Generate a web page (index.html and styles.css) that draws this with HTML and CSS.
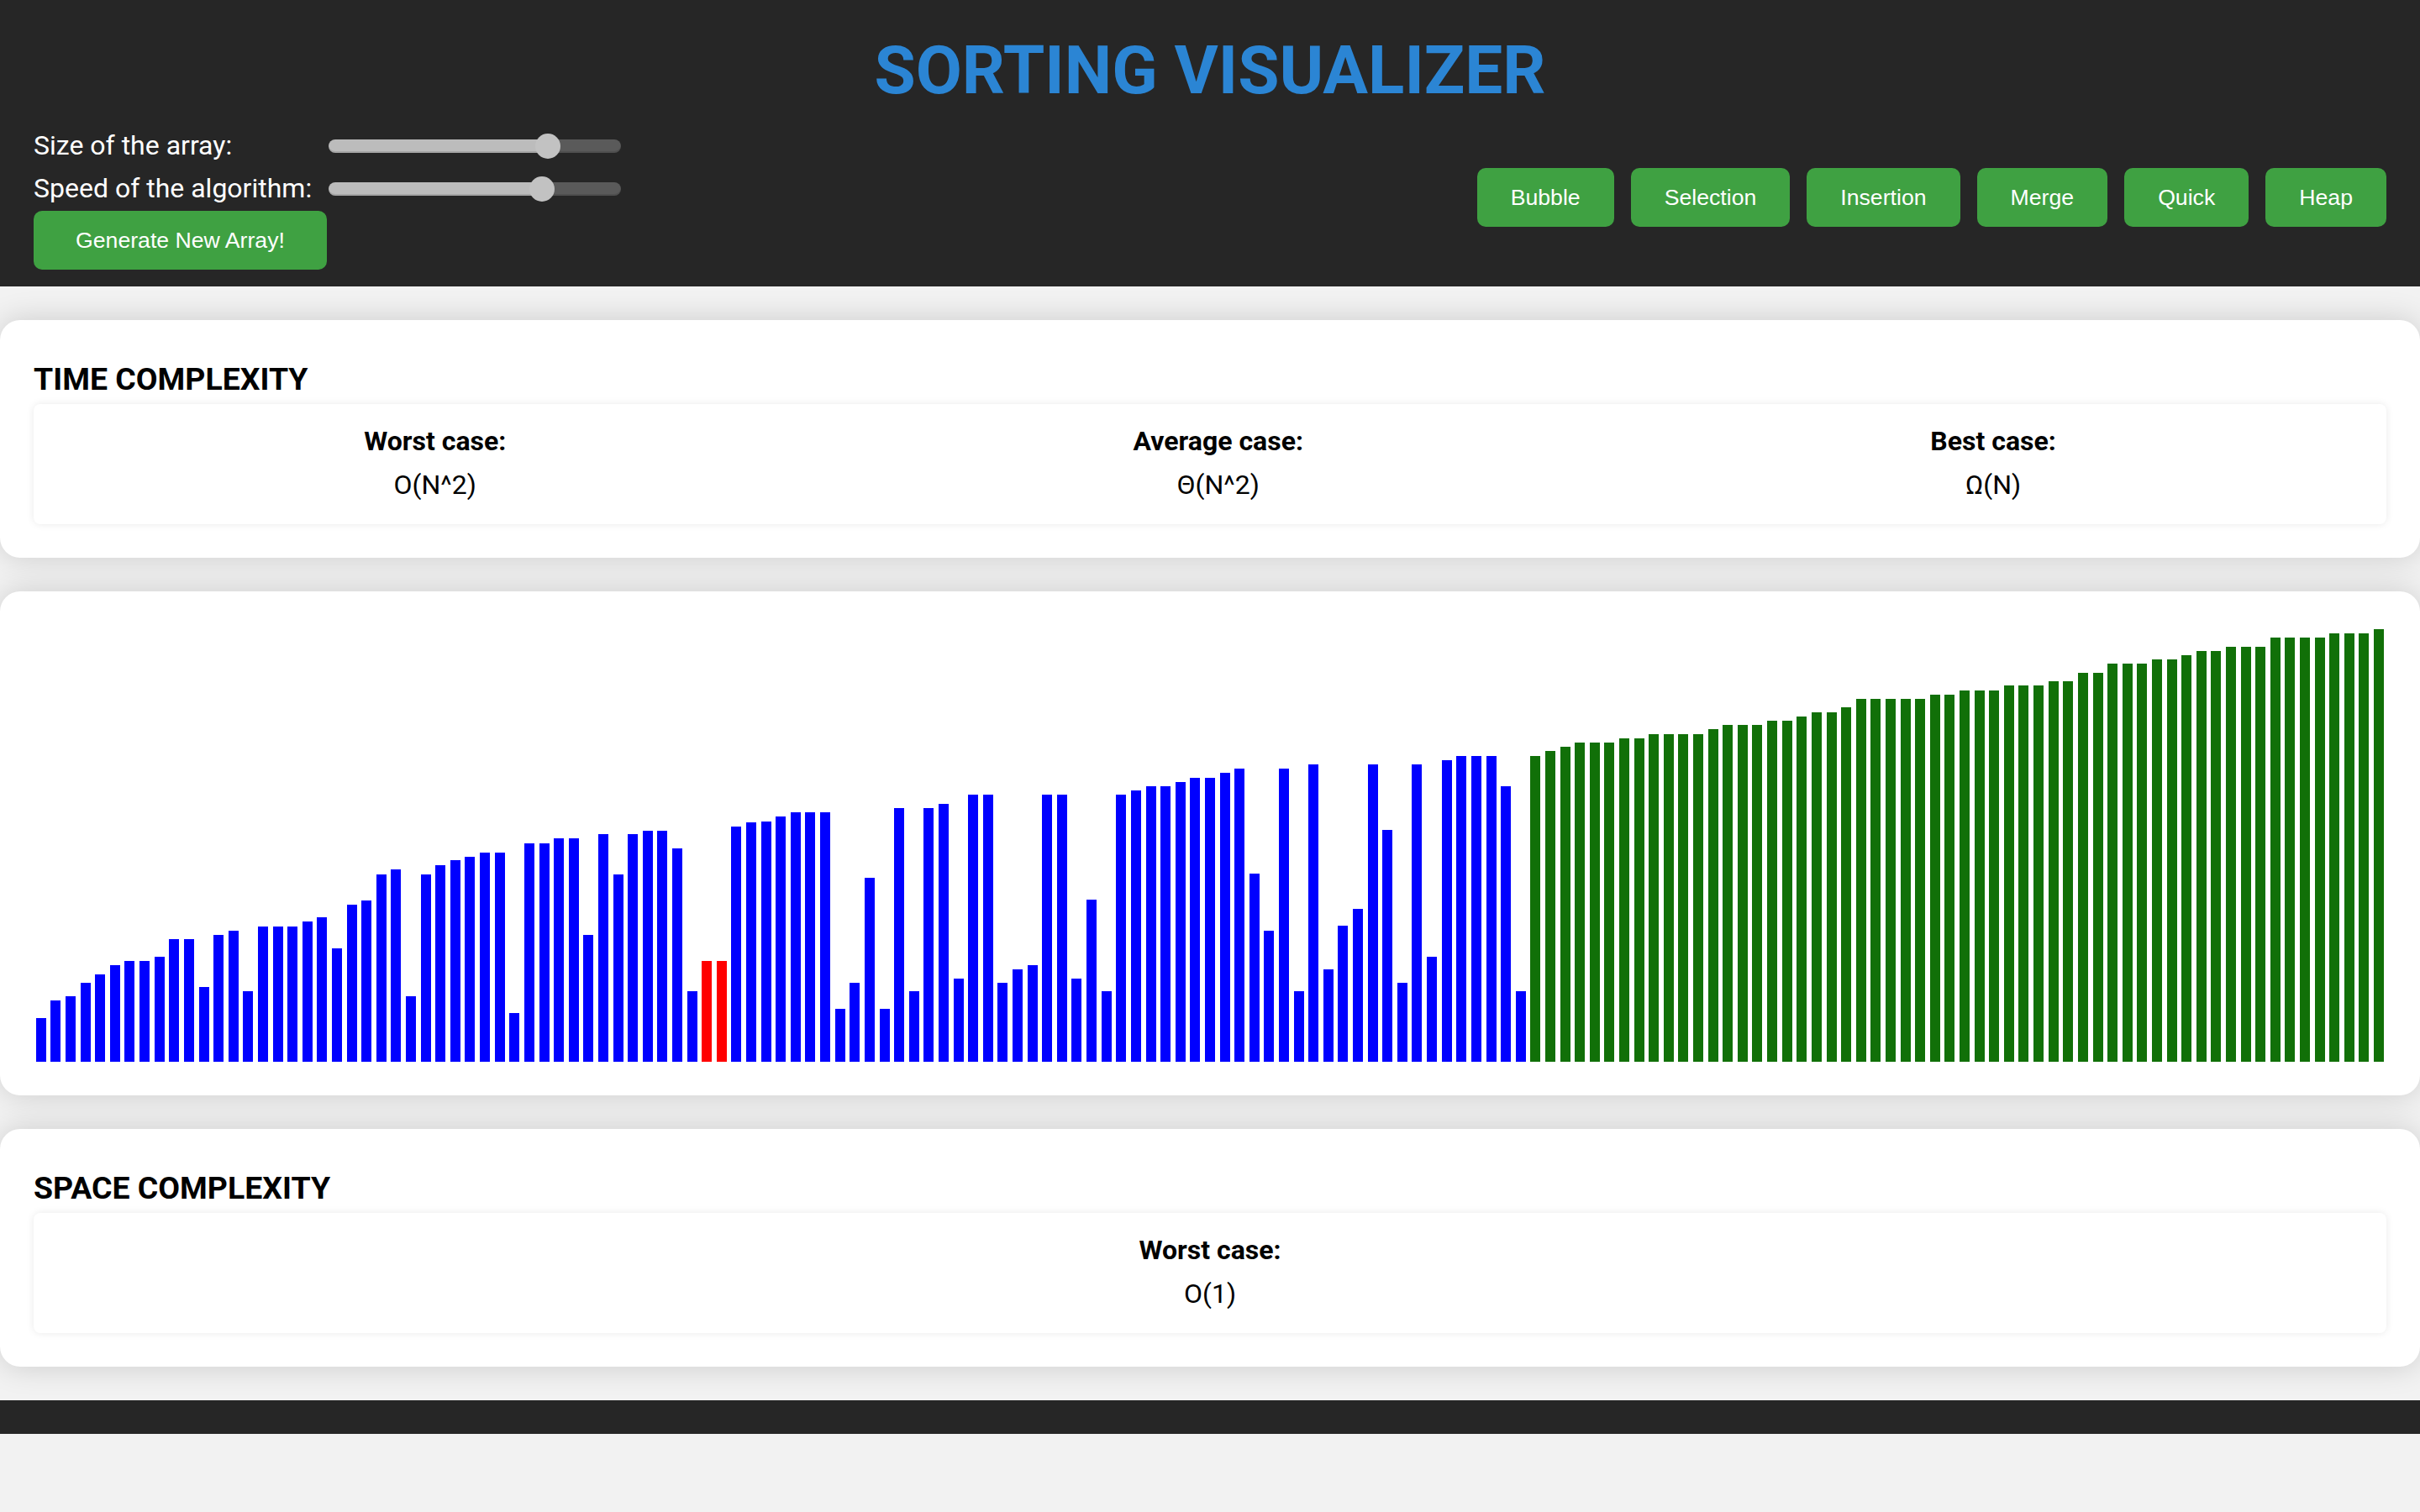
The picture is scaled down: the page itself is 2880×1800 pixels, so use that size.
FILE: index.html
```html
<!DOCTYPE html>
<html lang="en">
<head>
<meta charset="utf-8">
<title>Sorting Visualizer</title>
<link rel="stylesheet" href="styles.css">
</head>
<body>
<header class="header">
  <h1 class="title">SORTING VISUALIZER</h1>
  <div class="toolbar">
    <div class="controls">
      <label class="control-label" for="size">Size of the array:</label>
      <input class="range" id="size" type="range" min="0" max="1000" value="774" style="--fill:75%">
      <label class="control-label" for="speed">Speed of the algorithm:</label>
      <input class="range" id="speed" type="range" min="0" max="1000" value="752" style="--fill:73%">
      <button class="btn btn-generate" type="button">Generate New Array!</button>
    </div>
    <nav class="algo-group">
      <button class="btn" type="button">Bubble</button>
      <button class="btn" type="button">Selection</button>
      <button class="btn" type="button">Insertion</button>
      <button class="btn" type="button">Merge</button>
      <button class="btn" type="button">Quick</button>
      <button class="btn" type="button">Heap</button>
    </nav>
  </div>
</header>

<main class="main">
  <section class="card">
    <h3 class="card-title">TIME COMPLEXITY</h3>
    <div class="complexity-box">
      <div class="case"><span class="case-label">Worst case:</span><span class="case-value">O(N^2)</span></div>
      <div class="case"><span class="case-label">Average case:</span><span class="case-value">Θ(N^2)</span></div>
      <div class="case"><span class="case-label">Best case:</span><span class="case-value">Ω(N)</span></div>
    </div>
  </section>

  <section class="card card-viz">
    <div class="bars">
      <div class="bar" style="height:51.7px"></div>
      <div class="bar" style="height:72.7px"></div>
      <div class="bar" style="height:77.7px"></div>
      <div class="bar" style="height:93.8px"></div>
      <div class="bar" style="height:103.7px"></div>
      <div class="bar" style="height:114.8px"></div>
      <div class="bar" style="height:119.8px"></div>
      <div class="bar" style="height:119.8px"></div>
      <div class="bar" style="height:124.8px"></div>
      <div class="bar" style="height:145.8px"></div>
      <div class="bar" style="height:145.8px"></div>
      <div class="bar" style="height:88.8px"></div>
      <div class="bar" style="height:150.8px"></div>
      <div class="bar" style="height:155.8px"></div>
      <div class="bar" style="height:83.8px"></div>
      <div class="bar" style="height:161.5px"></div>
      <div class="bar" style="height:161.5px"></div>
      <div class="bar" style="height:161.5px"></div>
      <div class="bar" style="height:166.9px"></div>
      <div class="bar" style="height:171.8px"></div>
      <div class="bar" style="height:135.5px"></div>
      <div class="bar" style="height:187.5px"></div>
      <div class="bar" style="height:192.5px"></div>
      <div class="bar" style="height:223.5px"></div>
      <div class="bar" style="height:228.9px"></div>
      <div class="bar" style="height:77.7px"></div>
      <div class="bar" style="height:223.5px"></div>
      <div class="bar" style="height:233.8px"></div>
      <div class="bar" style="height:239.6px"></div>
      <div class="bar" style="height:244.5px"></div>
      <div class="bar" style="height:249.5px"></div>
      <div class="bar" style="height:249.5px"></div>
      <div class="bar" style="height:57.8px"></div>
      <div class="bar" style="height:259.9px"></div>
      <div class="bar" style="height:259.9px"></div>
      <div class="bar" style="height:265.6px"></div>
      <div class="bar" style="height:265.6px"></div>
      <div class="bar" style="height:150.8px"></div>
      <div class="bar" style="height:270.6px"></div>
      <div class="bar" style="height:223.5px"></div>
      <div class="bar" style="height:270.6px"></div>
      <div class="bar" style="height:275.5px"></div>
      <div class="bar" style="height:275.5px"></div>
      <div class="bar" style="height:254.5px"></div>
      <div class="bar" style="height:83.8px"></div>
      <div class="bar is-comparing" style="height:119.8px"></div>
      <div class="bar is-comparing" style="height:119.8px"></div>
      <div class="bar" style="height:280.5px"></div>
      <div class="bar" style="height:285.5px"></div>
      <div class="bar" style="height:285.7px"></div>
      <div class="bar" style="height:291.7px"></div>
      <div class="bar" style="height:296.7px"></div>
      <div class="bar" style="height:296.7px"></div>
      <div class="bar" style="height:296.7px"></div>
      <div class="bar" style="height:62.7px"></div>
      <div class="bar" style="height:93.7px"></div>
      <div class="bar" style="height:218.7px"></div>
      <div class="bar" style="height:62.7px"></div>
      <div class="bar" style="height:301.7px"></div>
      <div class="bar" style="height:83.7px"></div>
      <div class="bar" style="height:301.7px"></div>
      <div class="bar" style="height:306.7px"></div>
      <div class="bar" style="height:98.7px"></div>
      <div class="bar" style="height:317.7px"></div>
      <div class="bar" style="height:317.7px"></div>
      <div class="bar" style="height:93.7px"></div>
      <div class="bar" style="height:109.7px"></div>
      <div class="bar" style="height:114.7px"></div>
      <div class="bar" style="height:317.7px"></div>
      <div class="bar" style="height:317.7px"></div>
      <div class="bar" style="height:98.7px"></div>
      <div class="bar" style="height:192.7px"></div>
      <div class="bar" style="height:83.7px"></div>
      <div class="bar" style="height:317.7px"></div>
      <div class="bar" style="height:322.7px"></div>
      <div class="bar" style="height:327.7px"></div>
      <div class="bar" style="height:327.7px"></div>
      <div class="bar" style="height:332.7px"></div>
      <div class="bar" style="height:337.8px"></div>
      <div class="bar" style="height:337.8px"></div>
      <div class="bar" style="height:343.7px"></div>
      <div class="bar" style="height:348.8px"></div>
      <div class="bar" style="height:223.8px"></div>
      <div class="bar" style="height:155.6px"></div>
      <div class="bar" style="height:348.8px"></div>
      <div class="bar" style="height:83.7px"></div>
      <div class="bar" style="height:353.7px"></div>
      <div class="bar" style="height:109.8px"></div>
      <div class="bar" style="height:161.8px"></div>
      <div class="bar" style="height:181.8px"></div>
      <div class="bar" style="height:353.7px"></div>
      <div class="bar" style="height:275.8px"></div>
      <div class="bar" style="height:93.7px"></div>
      <div class="bar" style="height:353.7px"></div>
      <div class="bar" style="height:124.7px"></div>
      <div class="bar" style="height:358.8px"></div>
      <div class="bar" style="height:363.6px"></div>
      <div class="bar" style="height:363.6px"></div>
      <div class="bar" style="height:363.6px"></div>
      <div class="bar" style="height:327.8px"></div>
      <div class="bar" style="height:83.7px"></div>
      <div class="bar is-sorted" style="height:363.6px"></div>
      <div class="bar is-sorted" style="height:369.7px"></div>
      <div class="bar is-sorted" style="height:374.7px"></div>
      <div class="bar is-sorted" style="height:379.6px"></div>
      <div class="bar is-sorted" style="height:379.6px"></div>
      <div class="bar is-sorted" style="height:379.6px"></div>
      <div class="bar is-sorted" style="height:384.6px"></div>
      <div class="bar is-sorted" style="height:384.6px"></div>
      <div class="bar is-sorted" style="height:389.6px"></div>
      <div class="bar is-sorted" style="height:389.6px"></div>
      <div class="bar is-sorted" style="height:389.6px"></div>
      <div class="bar is-sorted" style="height:389.6px"></div>
      <div class="bar is-sorted" style="height:395.7px"></div>
      <div class="bar is-sorted" style="height:400.7px"></div>
      <div class="bar is-sorted" style="height:400.7px"></div>
      <div class="bar is-sorted" style="height:400.7px"></div>
      <div class="bar is-sorted" style="height:405.7px"></div>
      <div class="bar is-sorted" style="height:405.7px"></div>
      <div class="bar is-sorted" style="height:410.6px"></div>
      <div class="bar is-sorted" style="height:415.6px"></div>
      <div class="bar is-sorted" style="height:415.6px"></div>
      <div class="bar is-sorted" style="height:421.7px"></div>
      <div class="bar is-sorted" style="height:431.7px"></div>
      <div class="bar is-sorted" style="height:431.7px"></div>
      <div class="bar is-sorted" style="height:431.7px"></div>
      <div class="bar is-sorted" style="height:431.7px"></div>
      <div class="bar is-sorted" style="height:431.7px"></div>
      <div class="bar is-sorted" style="height:436.7px"></div>
      <div class="bar is-sorted" style="height:436.7px"></div>
      <div class="bar is-sorted" style="height:441.6px"></div>
      <div class="bar is-sorted" style="height:441.6px"></div>
      <div class="bar is-sorted" style="height:441.6px"></div>
      <div class="bar is-sorted" style="height:447.8px"></div>
      <div class="bar is-sorted" style="height:447.8px"></div>
      <div class="bar is-sorted" style="height:447.8px"></div>
      <div class="bar is-sorted" style="height:452.7px"></div>
      <div class="bar is-sorted" style="height:452.7px"></div>
      <div class="bar is-sorted" style="height:462.7px"></div>
      <div class="bar is-sorted" style="height:462.7px"></div>
      <div class="bar is-sorted" style="height:473.8px"></div>
      <div class="bar is-sorted" style="height:473.8px"></div>
      <div class="bar is-sorted" style="height:473.8px"></div>
      <div class="bar is-sorted" style="height:478.8px"></div>
      <div class="bar is-sorted" style="height:478.8px"></div>
      <div class="bar is-sorted" style="height:483.7px"></div>
      <div class="bar is-sorted" style="height:488.7px"></div>
      <div class="bar is-sorted" style="height:488.7px"></div>
      <div class="bar is-sorted" style="height:493.7px"></div>
      <div class="bar is-sorted" style="height:493.7px"></div>
      <div class="bar is-sorted" style="height:493.7px"></div>
      <div class="bar is-sorted" style="height:504.8px"></div>
      <div class="bar is-sorted" style="height:504.8px"></div>
      <div class="bar is-sorted" style="height:504.8px"></div>
      <div class="bar is-sorted" style="height:504.8px"></div>
      <div class="bar is-sorted" style="height:509.8px"></div>
      <div class="bar is-sorted" style="height:509.8px"></div>
      <div class="bar is-sorted" style="height:509.8px"></div>
      <div class="bar is-sorted" style="height:514.7px"></div>
    </div>
  </section>

  <section class="card">
    <h3 class="card-title">SPACE COMPLEXITY</h3>
    <div class="complexity-box">
      <div class="case"><span class="case-label">Worst case:</span><span class="case-value">O(1)</span></div>
    </div>
  </section>
</main>

<footer class="footer"></footer>
</body>
</html>
```

FILE: styles.css
```css
html {
  background: #f2f2f2;
}

body {
  margin: 0;
  font-family: Roboto, "Noto Sans", sans-serif;
  color: #000;
  background: #f2f2f2;
}

/* ---------- header ---------- */
.header {
  background: #262626;
  padding: 37px 40px 20px;
}

.title {
  margin: 0;
  text-align: center;
  font-family: Roboto, sans-serif;
  font-weight: 700;
  font-size: 80px;
  line-height: 94px;
  color: #2b85d4;
}

.toolbar {
  display: flex;
  justify-content: space-between;
  align-items: center;
  margin-top: 17px;
}

.controls {
  display: grid;
  grid-template-columns: auto 348px;
  grid-template-rows: 51px 51px auto;
  column-gap: 2px;
  align-items: center;
}

.control-label {
  color: #fff;
  font-size: 32px;
  line-height: 37px;
  white-space: nowrap;
}

.range {
  -webkit-appearance: none;
  appearance: none;
  margin: 0;
  width: 348px;
  height: 16px;
  border-radius: 8px;
  background: linear-gradient(to right, #bcbcbc 0, #bcbcbc var(--fill), #5a5a5a var(--fill), #5a5a5a 100%);
  box-shadow: inset 0 -2px 0 rgba(0, 0, 0, 0.12);
  outline: none;
}

.range::-webkit-slider-thumb {
  -webkit-appearance: none;
  appearance: none;
  width: 30px;
  height: 30px;
  border-radius: 50%;
  background: #c2c2c2;
  border: 0;
}

.btn {
  background: #3fa142;
  color: #fff;
  border: 0;
  border-radius: 10px;
  font-family: "Liberation Sans", Arial, sans-serif;
  font-size: 26.67px;
  line-height: 30px;
  padding: 20px 40px;
  margin: 0;
  cursor: pointer;
}

.btn-generate {
  grid-column: 1 / 2;
  justify-self: start;
  padding: 20px 50px;
  margin-top: 1px;
}

.algo-group {
  display: flex;
  gap: 20px;
}

/* ---------- main ---------- */
.main {
  display: flex;
  flex-direction: column;
  gap: 40px;
  padding: 40px 0;
}

.card {
  background: #fff;
  border-radius: 24px;
  box-shadow: 0 0 36px rgba(0, 0, 0, 0.16);
  padding: 48px 40px 40px;
}

.card-title {
  margin: 0 0 8px;
  font-weight: 700;
  font-size: 37.44px;
  line-height: 44px;
}

.complexity-box {
  display: flex;
  justify-content: space-around;
  padding: 26px 20px 28px;
  border-radius: 8px;
  box-shadow: 0 0 10px rgba(0, 0, 0, 0.09);
}

.case {
  display: flex;
  flex-direction: column;
  align-items: center;
  gap: 14px;
  font-size: 32px;
  line-height: 37.5px;
}

.case-label {
  font-weight: 700;
}

.case-value {
  font-weight: 400;
}

.card-viz {
  padding: 40px;
}

.bars {
  height: 520px;
  display: flex;
  align-items: flex-end;
  justify-content: space-around;
}

.bar {
  width: 12px;
  flex: none;
  background: #0000ff;
}

.bar.is-comparing {
  background: #ff0000;
}

.bar.is-sorted {
  background: #117008;
}

/* ---------- footer ---------- */
.footer {
  background: #262626;
  height: 40px;
}
```
